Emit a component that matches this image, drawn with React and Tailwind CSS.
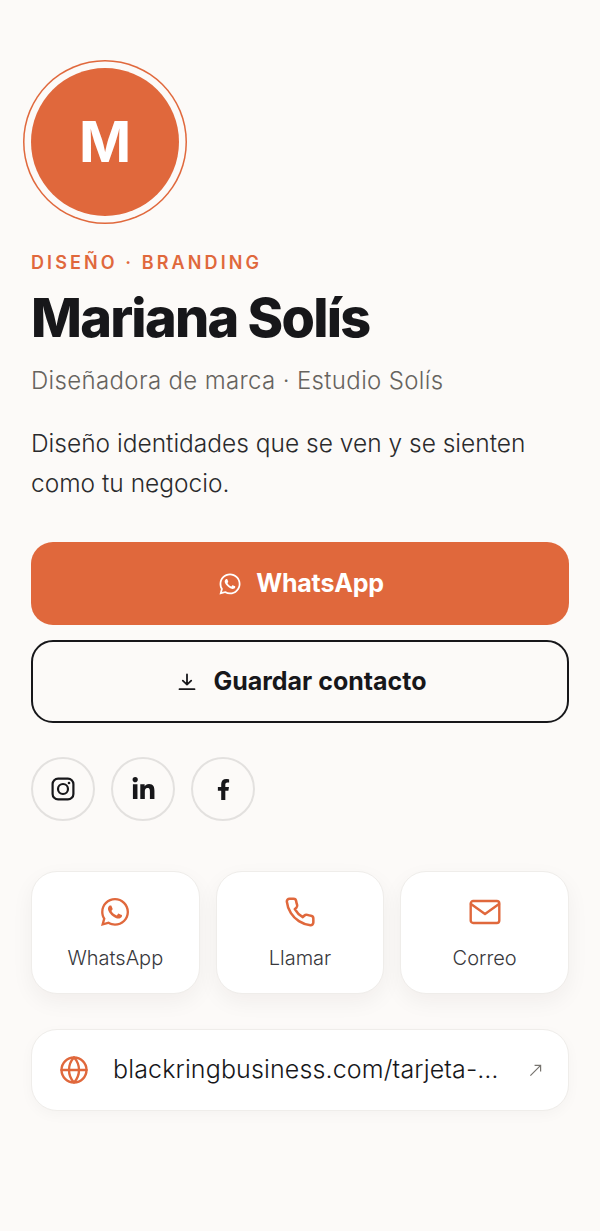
import React from 'react';
import { FaWhatsapp, FaLinkedinIn, FaFacebookF } from 'react-icons/fa';
import { Globe } from 'lucide-react';

function InstagramIcon() {
  return (
    <svg width="24" height="24" viewBox="0 0 24 24" fill="none" stroke="#17171a" strokeWidth="2.2">
      <rect x="1.6" y="1.6" width="20.8" height="20.8" rx="5.5" />
      <circle cx="12" cy="12" r="5" />
      <circle cx="18" cy="6" r="1.3" fill="#17171a" stroke="none" />
    </svg>
  );
}

function PhoneIcon() {
  return (
    <svg width="32" height="32" viewBox="0 0 24 24" fill="none" stroke="#e0683c" strokeWidth="1.9" strokeLinecap="round" strokeLinejoin="round">
      <path d="M22 16.92v3a2 2 0 0 1-2.18 2 19.79 19.79 0 0 1-8.63-3.07 19.5 19.5 0 0 1-6-6 19.79 19.79 0 0 1-3.07-8.67A2 2 0 0 1 4.11 2h3a2 2 0 0 1 2 1.72 12.84 12.84 0 0 0 .7 2.81 2 2 0 0 1-.45 2.11L8.09 9.91a16 16 0 0 0 6 6l1.27-1.27a2 2 0 0 1 2.11-.45 12.84 12.84 0 0 0 2.81.7A2 2 0 0 1 22 16.92z" />
    </svg>
  );
}

function MailIcon() {
  return (
    <svg width="32" height="26" viewBox="0 0 32 26" fill="none" stroke="#e0683c" strokeWidth="2.4" strokeLinejoin="round" strokeLinecap="round">
      <rect x="1.7" y="2" width="28.6" height="22" rx="2.5" />
      <path d="M2 5l14 10L30 5" />
    </svg>
  );
}

function DownloadIcon() {
  return (
    <svg width="18" height="18" viewBox="0 0 18 18" fill="none" stroke="#17171a" strokeWidth="1.8" strokeLinecap="round" strokeLinejoin="round">
      <path d="M9 1.5v10M4.8 7.6L9 11.6l4.2-4M1.5 16.2h15" />
    </svg>
  );
}

function ExternalIcon() {
  return (
    <svg width="13" height="13" viewBox="0 0 14 14" fill="none" stroke="#77746f" strokeWidth="1.3">
      <path d="M1.5 12.5L12.5 1.5M6 1.5h6.5V8" />
    </svg>
  );
}

function ActionCard({ icon, label }) {
  return (
    <div className="flex h-[123px] flex-1 flex-col items-center rounded-[26px] border border-[#efedea] bg-white shadow-[0_8px_22px_rgba(30,25,20,0.05)]">
      <div className="mt-[24px] flex h-[32px] items-center justify-center">{icon}</div>
      <span className="mt-[17px] text-[20px] font-light leading-[26px] text-[#38383c]">{label}</span>
    </div>
  );
}

function SocialButton({ children }) {
  return (
    <div className="flex h-[64px] w-[64px] items-center justify-center rounded-full border-2 border-[#e3e1df]">
      {children}
    </div>
  );
}

export default function App() {
  return (
    <div className="min-h-[1231px] bg-[#fcfaf8] px-[31px] pt-[68px] font-['Inter',sans-serif] text-[#17171a]">
      <div className="flex h-[148px] w-[148px] items-center justify-center rounded-full bg-[#e0683c] text-[56px] font-bold leading-none text-white shadow-[0_0_0_6.5px_#fcfaf8,0_0_0_8px_#e0683c]">
        M
      </div>

      <p className="mt-[33px] text-[18px] font-semibold leading-[28px] tracking-[3.1px] text-[#e0683c]">DISEÑO · BRANDING</p>
      <h1 className="mt-[11px] text-[54px] font-extrabold leading-[60px] tracking-[-1.75px]">Mariana Solís</h1>
      <p className="mt-[17px] text-[24px] font-light leading-[32px] tracking-[0.35px] text-[#66635e]">Diseñadora de marca · Estudio Solís</p>
      <p className="mt-[26px] text-[24.5px] font-light leading-[40px] text-[#2a2a2c]">
        Diseño identidades que se ven y se sienten
        <br />
        como tu negocio.
      </p>

      <button className="mt-[39px] flex h-[83px] w-full items-center justify-center gap-[14px] rounded-[22px] bg-[#e0683c] pl-[2px] text-[25px] font-bold tracking-[-0.2px] text-white">
        <FaWhatsapp size={24} />
        WhatsApp
      </button>
      <button className="mt-[15px] flex h-[83px] w-full items-center justify-center gap-[17px] rounded-[22px] border-2 border-[#17171a] pl-[5px] pt-[1px] text-[25px] font-bold">
        <DownloadIcon />
        Guardar contacto
      </button>

      <div className="mt-[34px] flex gap-[16px]">
        <SocialButton><InstagramIcon /></SocialButton>
        <SocialButton><FaLinkedinIn size={25} color="#17171a" /></SocialButton>
        <SocialButton><FaFacebookF size={21} color="#17171a" /></SocialButton>
      </div>

      <div className="mt-[50px] flex gap-[16px]">
        <ActionCard icon={<FaWhatsapp size={32} color="#e0683c" />} label="WhatsApp" />
        <ActionCard icon={<PhoneIcon />} label="Llamar" />
        <ActionCard icon={<MailIcon />} label="Correo" />
      </div>

      <div className="mt-[35px] flex h-[82px] items-center rounded-[26px] border border-[#efedea] bg-white pl-[27px] pr-[26px] shadow-[0_4px_14px_rgba(30,25,20,0.03)]">
        <Globe size={30} color="#e0683c" strokeWidth={1.9} />
        <span className="ml-[24px] w-[388px] truncate text-[25px] font-light tracking-[0.14px] text-[#17171a]">blackringbusiness.com/tarjeta-mariana</span>
        <span className="ml-auto"><ExternalIcon /></span>
      </div>
    </div>
  );
}
